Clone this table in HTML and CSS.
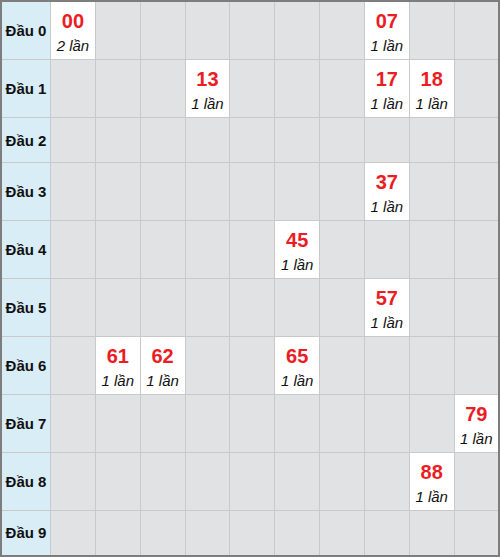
FILE: index.html
```html
<!DOCTYPE html>
<html lang="vi">
<head>
    <meta charset="UTF-8">
    <title>Thống kê đầu loto</title>
    <link rel="stylesheet" href="styles.css">
</head>
<body>
    <table class="loto">
        <tbody id="lotoBody"></tbody>
    </table>

    <script>
        // so xuat hien: "dau-duoi": so lan
        const hits = {
            "00": 2, "07": 1,
            "13": 1, "17": 1, "18": 1,
            "37": 1,
            "45": 1,
            "57": 1,
            "61": 1, "62": 1, "65": 1,
            "79": 1,
            "88": 1
        };

        const body = document.getElementById('lotoBody');
        for (let d = 0; d < 10; d++) {
            let row = '<tr><th class="head">Đầu ' + d + '</th>';
            for (let u = 0; u < 10; u++) {
                const key = '' + d + u;
                if (hits[key]) {
                    row += '<td class="hit"><div class="num">' + key + '</div>'
                        + '<div class="count">' + hits[key] + ' lần</div></td>';
                } else {
                    row += '<td></td>';
                }
            }
            body.innerHTML += row + '</tr>';
        }
    </script>
</body>
</html>
```

FILE: styles.css
```css
body, html {
    margin: 0;
    padding: 0;
    background: #fff;
    font-family: "Liberation Sans", Arial, sans-serif;
}

.loto {
    width: 500px;
    border-collapse: collapse;
    border: 2px solid #7d7d7d;
    table-layout: fixed;
}

.loto tr {
    height: 45px;
}

.loto th,
.loto td {
    border: 1px solid #c9c9c9;
    padding: 7px 0 1px;
    text-align: center;
    vertical-align: middle;
    background: #e1e2e4;
}

.loto th.head {
    width: 48px;
    padding: 0;
    background: #d9edf7;
    font-size: 15px;
    font-weight: bold;
    color: #111;
}

.loto td.hit {
    background: #fff;
}

.num {
    color: #ec1c24;
    font-size: 20px;
    font-weight: bold;
    line-height: 25px;
}

.count {
    font-size: 15px;
    font-style: italic;
    line-height: 24px;
    color: #111;
}
```
